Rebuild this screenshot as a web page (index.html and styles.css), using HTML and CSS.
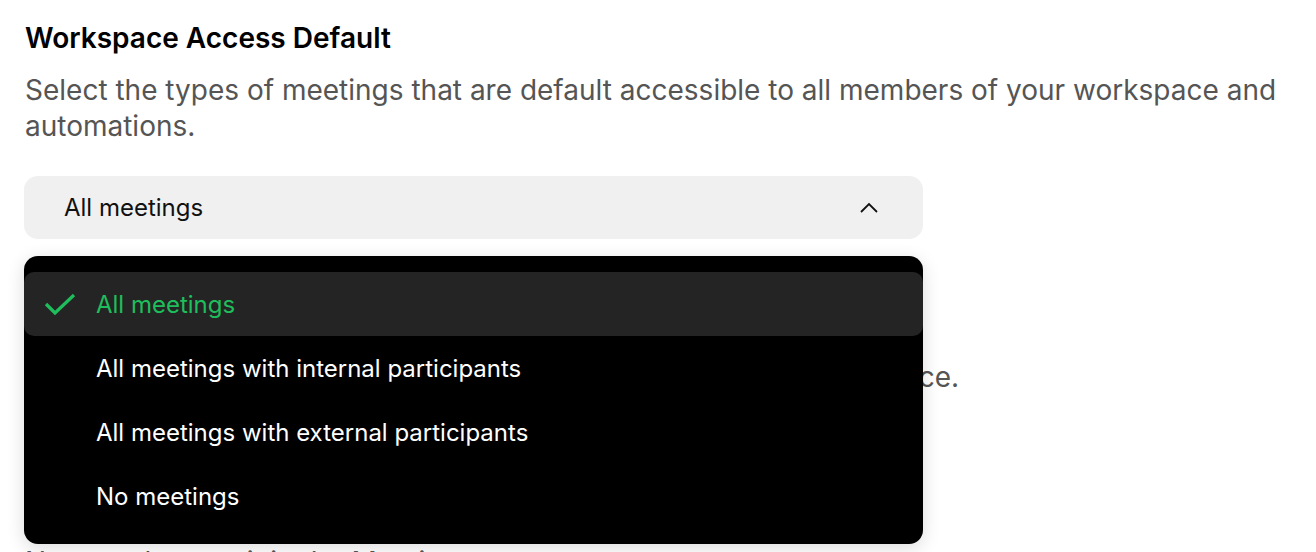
FILE: index.html
```html
<!DOCTYPE html>
<html>
<head>
<meta charset="utf-8">
<link rel="stylesheet" href="styles.css">
</head>
<body>
<div class="page">
  <section class="section">
    <h2 class="title">Workspace Access Default</h2>
    <p class="desc">Select the types of meetings that are default accessible to all members of your workspace and automations.</p>
    <div class="select-wrap">
      <div class="select">
        <span class="select-value">All meetings</span>
        <svg class="chevron" width="20" height="12" viewBox="0 0 20 12"><path d="M2 10 L10 2 L18 10" fill="none" stroke="#111" stroke-width="1.8"/></svg>
      </div>
      <div class="menu">
        <div class="item active">
          <svg class="check" width="32" height="24" viewBox="0 0 32 24"><path d="M2 12 L11 21 L30 3" fill="none" stroke="currentColor" stroke-width="3.2"/></svg>
          <span>All meetings</span>
        </div>
        <div class="item"><span>All meetings with internal participants</span></div>
        <div class="item"><span>All meetings with external participants</span></div>
        <div class="item"><span>No meetings</span></div>
      </div>
    </div>
  </section>
  <section class="section second">
    <h2 class="title">Guest Access</h2>
    <p class="desc near">Select the types of meetings that guests can access in the workspace.</p>
    <p class="desc lower">No one else can join the Meeting.</p>
  </section>
</div>
</body>
</html>
```
FILE: styles.css
```css
html, body {
  margin: 0;
  padding: 0;
  background: #fff;
}
body {
  font-family: "Inter", "Noto Sans", sans-serif;
  overflow: hidden;
  height: 552px;
}
.page {
  padding: 20px 25px 0 25px;
}
.title {
  margin: 0;
  font-size: 28px;
  font-weight: 600;
  color: #000;
  line-height: 36px;
}
.desc {
  margin: 16px 0 0 0;
  font-size: 28px;
  line-height: 36px;
  color: #555;
}
.select-wrap {
  position: relative;
  margin-top: 32px;
  width: 899px;
  margin-left: -1px;
}
.select {
  height: 63px;
  background: #f0f0f0;
  border-radius: 14px;
  display: flex;
  align-items: center;
  justify-content: space-between;
  padding: 0 44px 0 40px;
}
.select-value {
  font-size: 24px;
  color: #111;
}
.chevron {
  display: block;
}
.menu {
  position: absolute;
  left: 0;
  right: 0;
  top: 80px;
  background: #000;
  border-radius: 14px;
  padding: 16px 0;
  box-shadow: 0 4px 18px rgba(0,0,0,0.14);
  z-index: 5;
}
.item {
  height: 64px;
  display: flex;
  align-items: center;
  padding-left: 72px;
  font-size: 24px;
  color: #fff;
  border-radius: 10px;
  position: relative;
}
.item.active {
  background: #242424;
  color: #1fbe5c;
}
.check {
  position: absolute;
  left: 20px;
  top: 20px;
}
.second {
  margin-top: 73px;
}
.near {
  margin-top: 11px;
}
.lower {
  margin-top: 149px;
}
```
